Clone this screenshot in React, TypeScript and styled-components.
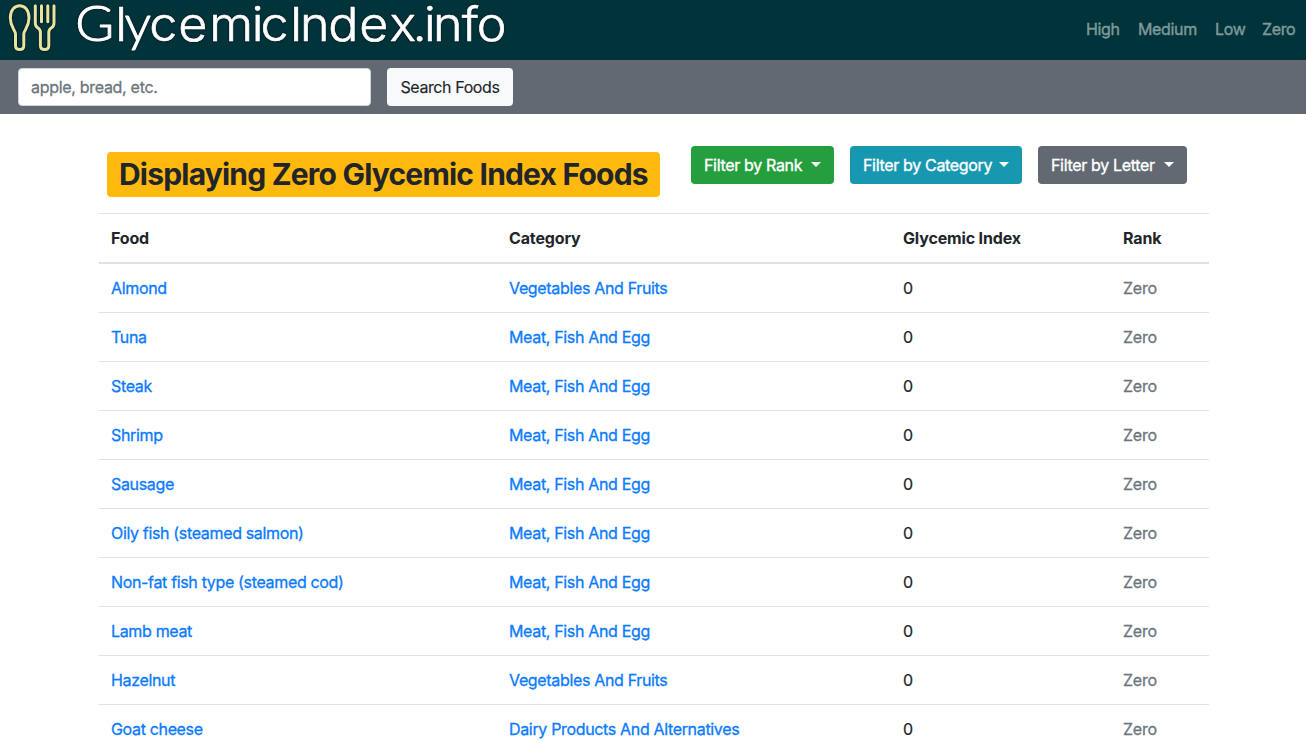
import React from 'react';
import styled, { createGlobalStyle } from 'styled-components';

const GlobalStyle = createGlobalStyle`
  *, *::before, *::after { box-sizing: border-box; }
  html, body { height: 752px; overflow: hidden; }
  body {
    margin: 0;
    background: #fff;
    color: #212529;
    font: 400 16px/24px Inter, "Liberation Sans", sans-serif;
  }
  button, input { font: inherit; margin: 0; }
`;

const Navbar = styled.header`
  display: flex;
  align-items: center;
  justify-content: space-between;
  height: 60px;
  padding-right: 10px;
  background: #00343a;
`;

const Logo = styled.svg`
  display: block;
  width: 520px;
  height: 60px;
  overflow: visible;
`;

const NavLinks = styled.nav`
  display: flex;
  gap: 18px;
  padding-bottom: 2px;
`;

const NavLink = styled.a<{ $width: number }>`
  width: ${p => p.$width}px;
  color: #7f999c;
  letter-spacing: -0.35px;
  white-space: nowrap;
  -webkit-text-stroke: 0.4px;
`;

const SearchBar = styled.form`
  display: flex;
  gap: 16px;
  height: 54px;
  padding: 8px 18px;
  background: #626972;
`;

const SearchInput = styled.input`
  width: 353px;
  height: 38px;
  padding: 6px 12px;
  border: 1px solid #ced4da;
  border-radius: 4px;
  background: #fff;
  letter-spacing: -0.3px;
  &::placeholder {
    color: #6c757d;
    opacity: 1;
    -webkit-text-stroke: 0.3px;
  }
`;

const SearchButton = styled.button`
  width: 126px;
  height: 38px;
  padding: 0;
  border: 0;
  border-radius: 4px;
  background: #f8f9fa;
  color: #212529;
  letter-spacing: -0.4px;
  -webkit-text-stroke: 0.15px;
`;

const Page = styled.main`
  width: 1110px;
  margin-left: 99px;
`;

const Toolbar = styled.div`
  display: flex;
  align-items: flex-start;
  height: 99px;
  padding: 32px 0 0 8px;
`;

const Title = styled.h1`
  width: 553px;
  height: 45px;
  margin: 6px 31px 0 0;
  padding-left: 12px;
  border-radius: 4px;
  background: #ffb90f;
  font-size: 30px;
  font-weight: 700;
  line-height: 45px;
  letter-spacing: -0.8px;
  white-space: nowrap;
`;

const Filters = styled.div`
  display: flex;
  gap: 16px;
`;

const FilterButton = styled.button<{ $color: string; $width: number }>`
  display: flex;
  align-items: center;
  justify-content: space-between;
  width: ${p => p.$width}px;
  height: 38px;
  padding: 0 13px;
  border: 0;
  border-radius: 4px;
  background: ${p => p.$color};
  color: #fff;
  letter-spacing: -0.33px;
  white-space: nowrap;
  -webkit-text-stroke: 0.35px;
  &::after {
    content: '';
    margin-top: -2px;
    border: 5px solid transparent;
    border-top-color: #fff;
    border-bottom: 0;
  }
`;

const Row = styled.div`
  display: grid;
  grid-template-columns: 398px 394px 220px 98px;
  height: 49px;
  padding-top: 12px;
  border-top: 1px solid #dee2e6;
  letter-spacing: -0.34px;
  & > * { padding-left: 12px; white-space: nowrap; }
`;

const HeaderRow = styled(Row)`
  height: 51px;
  border-bottom: 2px solid #dee2e6;
  font-weight: 700;
  letter-spacing: -0.15px;
  & + ${Row} { height: 48px; border-top: 0; }
`;

const CellLink = styled.a`
  color: #0a7aff;
  -webkit-text-stroke: 0.3px;
`;

const Value = styled.span`
  -webkit-text-stroke: 0.2px;
`;

const Rank = styled.span`
  color: #6c757d;
  letter-spacing: -0.2px;
  -webkit-text-stroke: 0.3px;
`;

const MEAT = 'Meat, Fish And Egg';
const VEG = 'Vegetables And Fruits';

const foods = [
  ['Almond', VEG],
  ['Tuna', MEAT],
  ['Steak', MEAT],
  ['Shrimp', MEAT],
  ['Sausage', MEAT],
  ['Oily fish (steamed salmon)', MEAT],
  ['Non-fat fish type (steamed cod)', MEAT],
  ['Lamb meat', MEAT],
  ['Hazelnut', VEG],
  ['Goat cheese', 'Dairy Products And Alternatives'],
];

const SPOON =
  'M15.5 45.5 V34 C15.5 30 10.3 27.5 10.3 18 C10.3 10 14.5 5.8 19.7 5.8 C24.9 5.8 29 10 29 18 C29 27.5 23.8 30 23.8 34 V45.5 Q23.8 49.5 19.7 49.5 Q15.5 49.5 15.5 45.5 Z';
const FORK =
  'M35.3 5.8 V23 Q35.3 26.5 38 28 Q40.4 29.5 40.4 32.5 V45.5 Q40.4 49.5 44.6 49.5 Q48.8 49.5 48.8 45.5 V32.5 Q48.8 29.5 51.2 28 Q54 26.5 54 23 V5.8 M41.5 5.8 V21.8 M47.8 5.8 V21.8';

const WORDMARK_STRETCH = 1.08;
const spread = (...xs: number[]) =>
  xs.map(x => (x / WORDMARK_STRETCH).toFixed(2)).join(' ');

const Wordmark = styled.text`
  font-family: Inter, sans-serif;
  font-size: 46.5px;
  font-weight: 300;
  fill: #fff;
  stroke: #fff;
  stroke-width: 0.6px;
  stroke-linejoin: round;
  filter: drop-shadow(0 0 0.8px #001018);
`;

const LatoGlyph = styled.tspan`
  font-family: Lato, sans-serif;
  font-size: 49px;
  font-weight: 300;
  stroke-width: 1px;
`;

function Brand() {
  return (
    <Logo viewBox="0 0 520 60" role="img">
      <g fill="none" strokeLinecap="round" strokeLinejoin="round">
        <path d={SPOON + FORK} stroke="#001c24" strokeWidth="4.6" />
        <path d={SPOON + FORK} stroke="#e9e3a0" strokeWidth="3" />
      </g>
      <Wordmark y="41" transform={`scale(${WORDMARK_STRETCH} 1)`}>
        <LatoGlyph x={spread(75.2)}>G</LatoGlyph>
        <tspan x={spread(115.3)}>l</tspan>
        <LatoGlyph x={spread(124.6)}>y</LatoGlyph>
        <tspan x={spread(149.3, 178.3, 209.3, 251.8, 260.6, 289.5, 300, 328.3, 359.3, 389.5)}>
          cemicIndex
        </tspan>
        <LatoGlyph x={spread(413.5)}>.</LatoGlyph>
        <tspan x={spread(424, 433, 461.7, 476.7)}>info</tspan>
      </Wordmark>
    </Logo>
  );
}

export default function App() {
  return (
    <>
      <GlobalStyle />
      <Navbar>
        <Brand />
        <NavLinks>
          <NavLink $width={34}>High</NavLink>
          <NavLink $width={59}>Medium</NavLink>
          <NavLink $width={29}>Low</NavLink>
          <NavLink $width={34}>Zero</NavLink>
        </NavLinks>
      </Navbar>
      <SearchBar>
        <SearchInput placeholder="apple, bread, etc." />
        <SearchButton type="button">Search Foods</SearchButton>
      </SearchBar>
      <Page>
        <Toolbar>
          <Title>Displaying Zero Glycemic Index Foods</Title>
          <Filters>
            <FilterButton $color="#259f3d" $width={143}>Filter by Rank</FilterButton>
            <FilterButton $color="#1898b0" $width={172}>Filter by Category</FilterButton>
            <FilterButton $color="#626972" $width={149}>Filter by Letter</FilterButton>
          </Filters>
        </Toolbar>
        <HeaderRow>
          <span>Food</span>
          <span>Category</span>
          <span>Glycemic Index</span>
          <span>Rank</span>
        </HeaderRow>
        {foods.map(([food, category]) => (
          <Row key={food}>
            <CellLink>{food}</CellLink>
            <CellLink>{category}</CellLink>
            <Value>0</Value>
            <Rank>Zero</Rank>
          </Row>
        ))}
      </Page>
    </>
  );
}
